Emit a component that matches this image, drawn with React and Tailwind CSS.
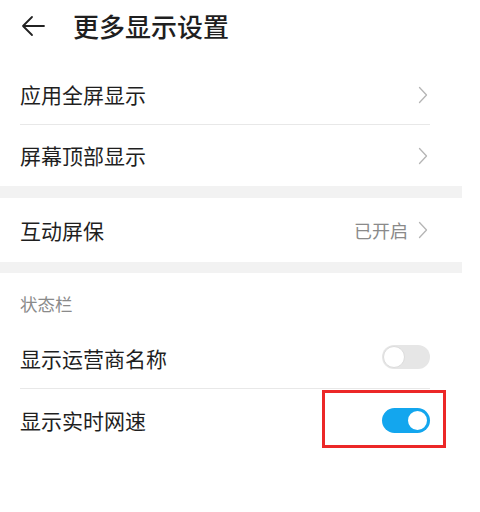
import React from "react";

const font = { fontFamily: '"Noto Sans CJK SC", "Noto Sans", sans-serif' };

function Chevron() {
  return (
    <svg width="10" height="18" viewBox="0 0 10 18" className="shrink-0">
      <path d="M1.5 1.5 L8.5 9 L1.5 16.5" fill="none" stroke="#b5b5b5" strokeWidth="1.3" strokeLinecap="round" strokeLinejoin="round" />
    </svg>
  );
}

function Row({ label, right, divider, h = "h-[62px]" }) {
  return (
    <div className={`relative flex items-center justify-between pl-[20px] pr-[34px] ${h}`}>
      <span className="text-[21px] text-[#1f1f1f] leading-none">{label}</span>
      {right}
      {divider && <div className="absolute bottom-0 left-[20px] right-[32px] h-px bg-[#e8e8e8]" />}
    </div>
  );
}

function Toggle({ on }) {
  if (on) {
    return (
      <div className="w-[48px] h-[25px] rounded-full bg-[#13a6ee] flex items-center justify-end pr-[1px]">
        <div className="w-[23px] h-[23px] rounded-full bg-white border-[2px] border-[#13a6ee]" />
      </div>
    );
  }
  return (
    <div className="w-[48px] h-[24px] rounded-full bg-[#e6e6e6] flex items-center pl-[1px]">
      <div className="w-[22px] h-[22px] rounded-full bg-white border border-[#dcdcdc]" />
    </div>
  );
}

export default function App() {
  return (
    <div className="w-[480px] h-[512px] bg-white overflow-hidden" style={font}>
      <div className="w-[462px]">
        <div className="h-[64px] flex items-start pt-[12px] pl-[20px]">
          <svg width="26" height="26" viewBox="0 0 26 26" className="mt-[1px]">
            <path d="M24 13 H3 M12 4 L3 13 L12 22" fill="none" stroke="#222" strokeWidth="1.8" strokeLinecap="round" strokeLinejoin="round" />
          </svg>
          <span className="ml-[27px] text-[26px] font-medium text-[#1f1f1f] leading-[28px]">更多显示设置</span>
        </div>
        <Row label="应用全屏显示" right={<Chevron />} divider h="h-[61px]" />
        <Row label="屏幕顶部显示" right={<Chevron />} h="h-[61px]" />
        <div className="h-[12px] bg-[#f2f2f2]" />
        <Row
          label="互动屏保"
          h="h-[64px]"
          right={
            <div className="flex items-center gap-[10px]">
              <span className="text-[18px] text-[#8a8a8a] leading-none">已开启</span>
              <Chevron />
            </div>
          }
        />
        <div className="h-[11px] bg-[#f2f2f2]" />
        <div className="h-[55px] pl-[20px] pt-[19px]">
          <span className="text-[17.5px] text-[#8a8a8a] leading-none">状态栏</span>
        </div>
        <Row label="显示运营商名称" h="h-[61px]" divider right={<div className="-mr-[2px] -mt-[3px]"><Toggle /></div>} />
        <Row label="显示实时网速" h="h-[62px]" right={
          <div className="relative -mr-[2px]">
            <Toggle on />
            <div className="absolute left-[-60px] top-[-18px] w-[124px] h-[58px] border-[3px] border-[#ec2727]" />
          </div>
        } />
      </div>
    </div>
  );
}
